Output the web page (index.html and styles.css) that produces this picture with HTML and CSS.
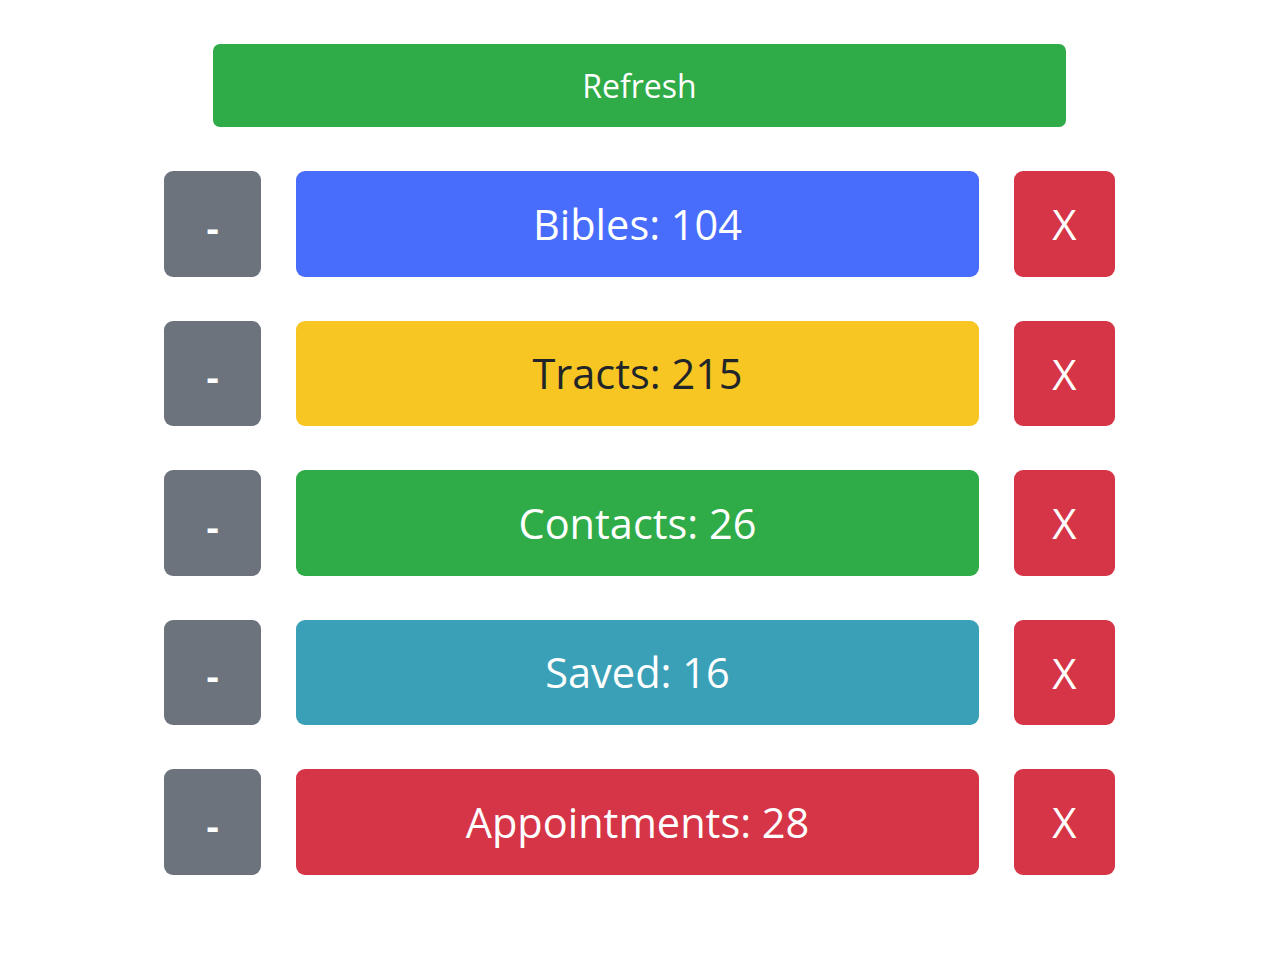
FILE: index.html
```html
<!DOCTYPE html>
<html>
<head>
<meta charset="utf-8">
<link rel="stylesheet" href="styles.css">
</head>
<body>
<div class="page">
  <button class="refresh">Refresh</button>
  <div class="rows">
    <div class="row">
      <button class="btn minus">-</button>
      <button class="btn count blue">Bibles: 104</button>
      <button class="btn clear">X</button>
    </div>
    <div class="row">
      <button class="btn minus">-</button>
      <button class="btn count yellow">Tracts: 215</button>
      <button class="btn clear">X</button>
    </div>
    <div class="row">
      <button class="btn minus">-</button>
      <button class="btn count green">Contacts: 26</button>
      <button class="btn clear">X</button>
    </div>
    <div class="row">
      <button class="btn minus">-</button>
      <button class="btn count teal">Saved: 16</button>
      <button class="btn clear">X</button>
    </div>
    <div class="row">
      <button class="btn minus">-</button>
      <button class="btn count red">Appointments: 28</button>
      <button class="btn clear">X</button>
    </div>
  </div>
</div>
</body>
</html>
```
FILE: styles.css
```css
html, body {
  margin: 0;
  padding: 0;
  background: #ffffff;
}
body {
  font-family: "Open Sans", "Noto Sans", sans-serif;
}
.page {
  display: flex;
  flex-direction: column;
  align-items: center;
  padding-top: 44px;
  padding-right: 1px;
}
button {
  font-family: inherit;
  border: none;
  color: #ffffff;
  cursor: pointer;
  padding: 0;
  display: flex;
  align-items: center;
  justify-content: center;
}
.refresh {
  width: 853px;
  height: 83px;
  background: #2fab48;
  border-radius: 7px;
  font-size: 32px;
}
.rows {
  display: flex;
  flex-direction: column;
  gap: 44px;
  margin-top: 44px;
}
.row {
  display: flex;
  gap: 35px;
  height: 105.5px;
}
.btn {
  height: 105.5px;
  border-radius: 9px;
}
.minus {
  width: 97px;
  background: #6c737d;
  font-size: 38px;
  font-weight: 700;
  padding-top: 6px;
}
.count {
  width: 683px;
  font-size: 41.5px;
}
.clear {
  width: 101px;
  background: #d53547;
  font-size: 42px;
}
.blue { background: #486dfd; }
.yellow { background: #f7c623; color: #212529; }
.green { background: #2fab48; }
.teal { background: #3aa0b7; }
.red { background: #d53547; }
```
